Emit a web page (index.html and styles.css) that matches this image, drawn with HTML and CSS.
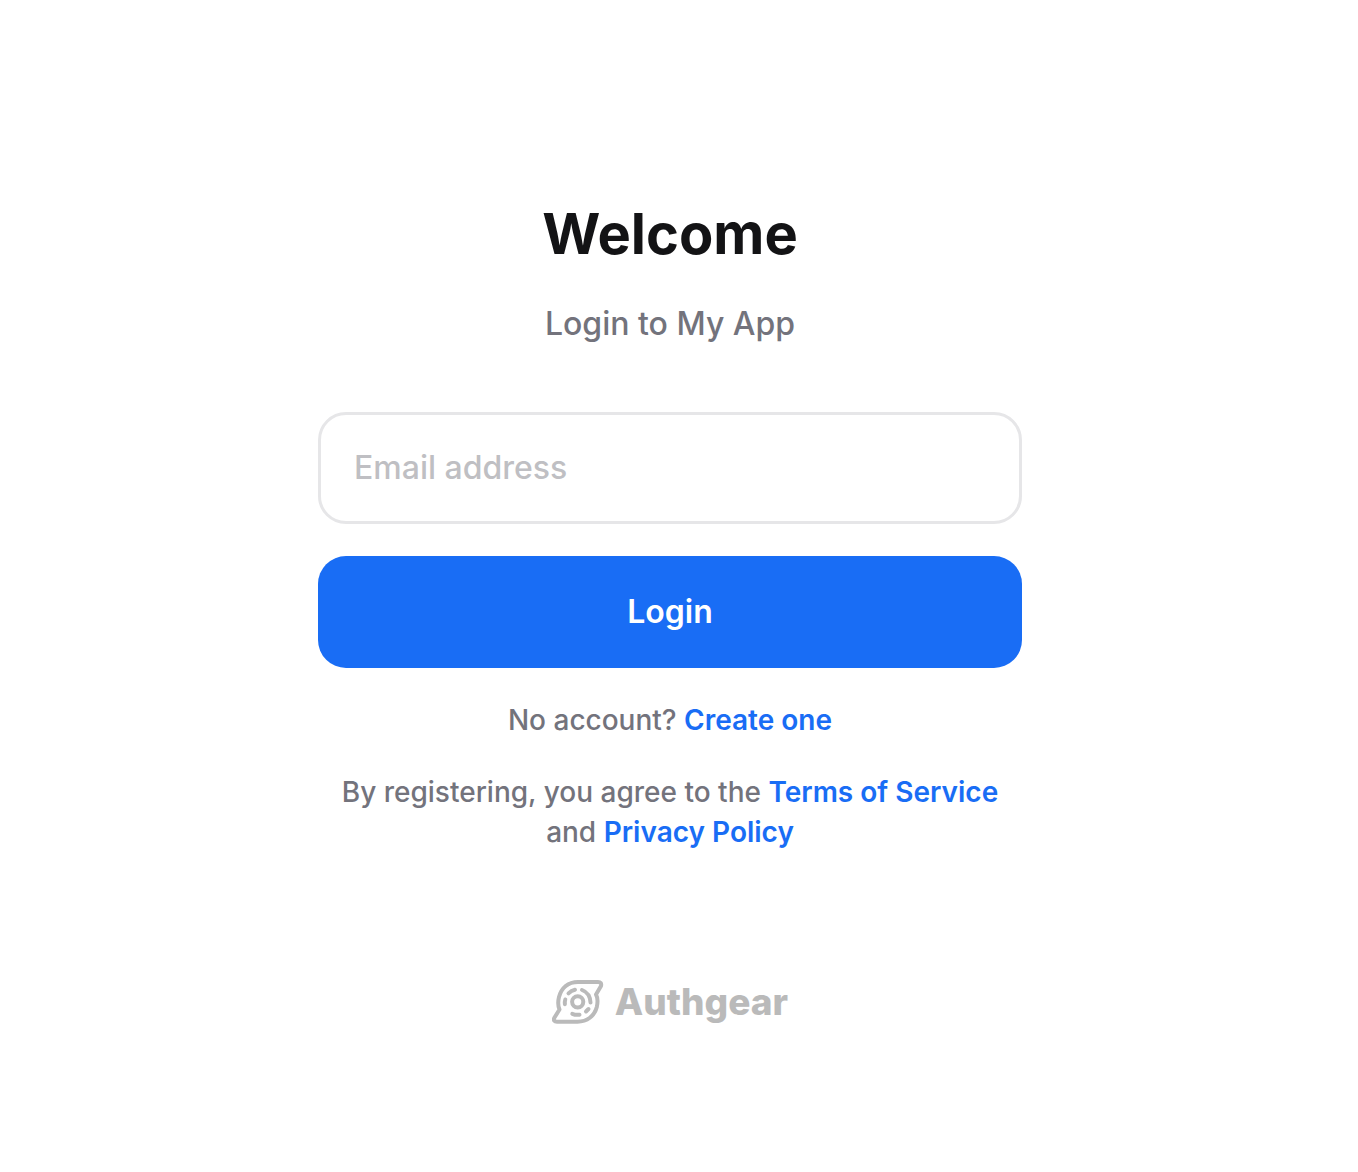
FILE: index.html
```html
<!DOCTYPE html>
<html lang="en">
<head>
<meta charset="utf-8">
<meta name="viewport" content="width=device-width, initial-scale=1">
<title>Login to My App</title>
<link rel="stylesheet" href="styles.css">
</head>
<body class="page">
<main class="card">
  <header class="heading">
    <h1 class="title">Welcome</h1>
    <p class="subtitle">Login to My App</p>
  </header>
  <form class="form">
    <input class="field" type="email" name="email" placeholder="Email address" aria-label="Email address">
    <button class="submit" type="submit">Login</button>
  </form>
  <p class="note">No account? <a class="link" href="#signup">Create one</a></p>
  <p class="note">By registering, you agree to the <a class="link" href="#terms">Terms of Service</a> and <a class="link" href="#privacy">Privacy Policy</a></p>
  <footer class="brand">
    <svg class="brand-mark" viewBox="0 0 52 44" aria-hidden="true">
      <path d="M26 2H46Q50 2 49 6L44 14.500C46 18 45.900 22 44.800 27C42.500 36 35 41.700 25.500 41.700H5Q1 41.700 2.200 38L7.500 29.500C6 26 6 21 7 17C9.500 8 16 2 26 2Z"/>
      <circle cx="25.700" cy="21.800" r="5.600"/>
      <path d="M16.500 13.300Q19.300 10.500 23 9.700M13.300 19.500Q12.500 22 12.900 24.200M30 10Q38 13 38.500 22.500M20.300 33.800Q23.700 35.200 27.500 34.700M34 31.500L36.500 29"/>
    </svg>
    <span class="brand-name">Authgear</span>
  </footer>
</main>
</body>
</html>
```

FILE: styles.css
```css
* {
  box-sizing: border-box;
}

.page {
  margin: 0;
  padding: 200px 18px 0 0;
  background: #fff;
  color: #131315;
  font-family: Inter, "Liberation Sans", sans-serif;
}

.card {
  width: 100%;
  max-width: 704px;
  margin: 0 auto;
  text-align: center;
}

.title {
  margin: 0;
  font-size: 56px;
  line-height: 68px;
  font-weight: 700;
}

.subtitle {
  margin: 32px 0 0;
  color: #73737c;
  font-size: 32px;
  line-height: 48px;
  font-weight: 500;
}

.form {
  display: flex;
  flex-direction: column;
  gap: 32px;
  margin-top: 64px;
}

.field,
.submit {
  width: 100%;
  height: 112px;
  padding: 0 33px 2px;
  border-radius: 28px;
  font-family: inherit;
  font-size: 32px;
}

.field {
  border: 3px solid #e6e6e8;
  background: #fff;
  color: #131315;
  font-weight: 500;
}

.field::placeholder {
  color: #bfbfc3;
  opacity: 1;
}

.submit {
  border: 0;
  background: #196df5;
  color: #fff;
  font-weight: 600;
}

.note {
  margin: 32px 0 0;
  color: #73737c;
  font-size: 28px;
  line-height: 40px;
  font-weight: 500;
}

.link {
  color: #196df5;
  font-weight: 600;
  text-decoration: none;
}

.brand {
  display: flex;
  align-items: center;
  justify-content: center;
  gap: 11px;
  margin-top: 128px;
  color: #bababa;
}

.brand-mark {
  width: 52px;
  height: 44px;
  fill: none;
  stroke: currentColor;
  stroke-width: 4;
  stroke-linecap: round;
  stroke-linejoin: round;
}

.brand-name {
  font-size: 37px;
  line-height: 44px;
  font-weight: 800;
}
```
